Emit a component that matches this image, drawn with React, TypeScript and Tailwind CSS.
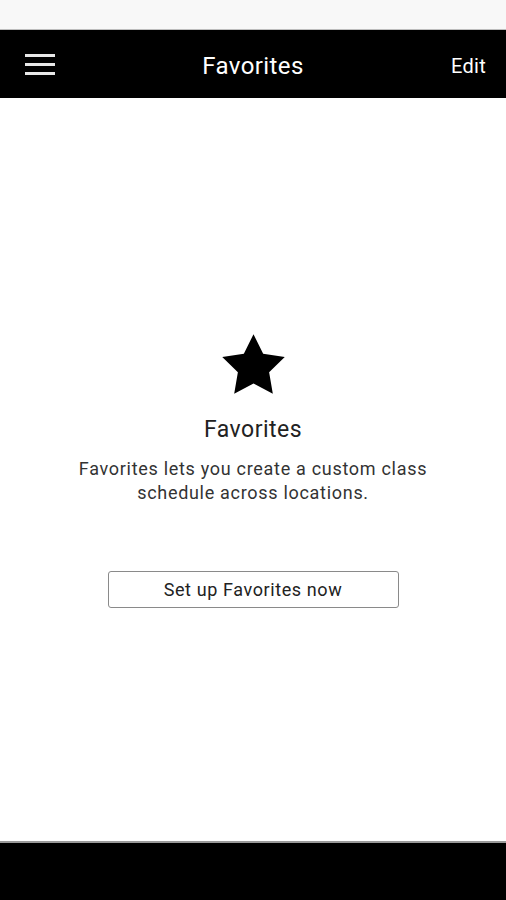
const StarIcon = () => (
  <svg viewBox="0 0 24 24" className="w-[75px] h-[75px]">
    <polygon
      points="12,2 15.09,8.26 22,9.27 17,14.14 18.18,21.02 12,17.77 5.82,21.02 7,14.14 2,9.27 8.91,8.26"
      fill="#000"
    />
  </svg>
);

const App = () => {
  return (
    <div className="w-[506px] h-[900px] flex flex-col bg-white font-['Roboto',sans-serif] overflow-hidden">
      <div className="h-[30px] bg-[#f8f8f8] border-b border-[#bdbdbd]" />

      <header className="h-[68px] bg-black flex items-center justify-between pl-[25px] pr-[20px]">
        <div className="w-[30px] flex flex-col gap-[6px]">
          <span className="h-[3px] bg-[#e8e8e8]" />
          <span className="h-[3px] bg-[#e8e8e8]" />
          <span className="h-[3px] bg-[#e8e8e8]" />
        </div>
        <h1 className="text-[24px] tracking-[0.4px] text-white mt-[4px]">Favorites</h1>
        <button className="text-[20px] tracking-[0.3px] text-white mt-[3px]">Edit</button>
      </header>

      <main className="flex-1 flex flex-col items-center pt-[230px]">
        <StarIcon />
        <h2 className="mt-[13px] text-[23px] leading-[28px] tracking-[0.5px] text-[#222]">Favorites</h2>
        <p className="mt-[13px] text-[18px] leading-[24px] tracking-[0.7px] text-[#333] text-center">
          Favorites lets you create a custom class
          <br />
          schedule across locations.
        </p>
        <button className="mt-[66px] w-[291px] h-[37px] border-[1.5px] border-[#8a8a8a] rounded-[3px] text-[18px] tracking-[0.6px] text-[#222]">
          Set up Favorites now
        </button>
      </main>

      <div className="h-[59px] bg-black border-t-2 border-[#9a9a9a]" />
    </div>
  );
};

export default App;
